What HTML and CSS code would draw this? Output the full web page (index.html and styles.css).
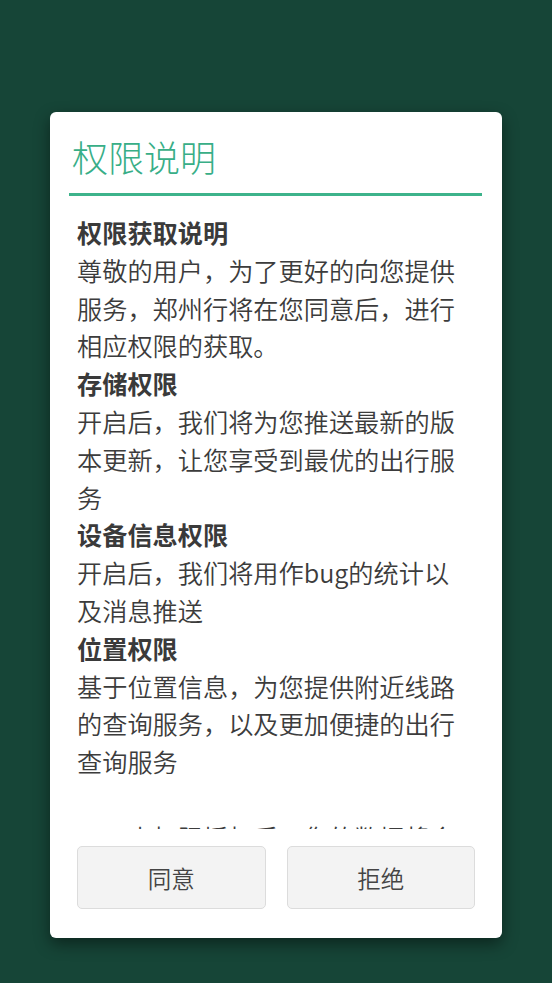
FILE: index.html
```html
<!DOCTYPE html>
<html lang="zh-CN">
<head>
  <meta charset="UTF-8">
  <title>权限说明</title>
  <link rel="stylesheet" href="styles.css">
</head>
<body>
  <div class="dialog">
    <h1 class="dialog-title">权限说明</h1>
    <div class="dialog-content">
      <div class="item-title">权限获取说明</div>
      <div class="item-text">尊敬的用户，为了更好的向您提供服务，郑州行将在您同意后，进行相应权限的获取。</div>
      <div class="item-title">存储权限</div>
      <div class="item-text">开启后，我们将为您推送最新的版本更新，让您享受到最优的出行服务</div>
      <div class="item-title">设备信息权限</div>
      <div class="item-text">开启后，我们将用作bug的统计以及消息推送</div>
      <div class="item-title">位置权限</div>
      <div class="item-text">基于位置信息，为您提供附近线路的查询服务，以及更加便捷的出行查询服务</div>
      <div class="item-text">&nbsp;</div>
      <div class="item-text">三、本权限授权后，您的数据将会安全存储，不会泄露给第三方</div>
    </div>
    <div class="dialog-buttons">
      <button class="btn">同意</button>
      <button class="btn">拒绝</button>
    </div>
  </div>
</body>
</html>
```

FILE: styles.css
```css
body {
  margin: 0;
  height: 983px;
  background-color: #164537;
  font-family: "Noto Sans CJK SC", "Noto Sans", sans-serif;
  overflow: hidden;
}

.dialog {
  width: 452px;
  margin: 112px auto 0;
  background: #fff;
  border-radius: 6px;
  box-shadow: 0 6px 16px rgba(0, 0, 0, 0.45);
  padding-bottom: 29px;
}

.dialog-title {
  margin: 0 20px 0 19px;
  padding: 22px 0 15px 3px;
  font-size: 36px;
  line-height: 44px;
  font-weight: 300;
  color: #38ae87;
  border-bottom: 3px solid #3db38b;
}

.dialog-content {
  margin: 18px 40px 0 27px;
  height: 615px;
  overflow: hidden;
  font-size: 25.2px;
  line-height: 37.8px;
  font-weight: 350;
  color: #3c3c3c;
}

.item-title {
  font-weight: bold;
  color: #3a3a3a;
}

.dialog-buttons {
  display: flex;
  gap: 21px;
  margin: 17px 27px 0;
}

.btn {
  flex: 1;
  height: 63px;
  background: #f3f3f3;
  border: 1px solid #dcdcdc;
  border-radius: 5px;
  font-family: "Noto Sans CJK SC", sans-serif;
  font-size: 23.5px;
  font-weight: 350;
  color: #444;
}
```
